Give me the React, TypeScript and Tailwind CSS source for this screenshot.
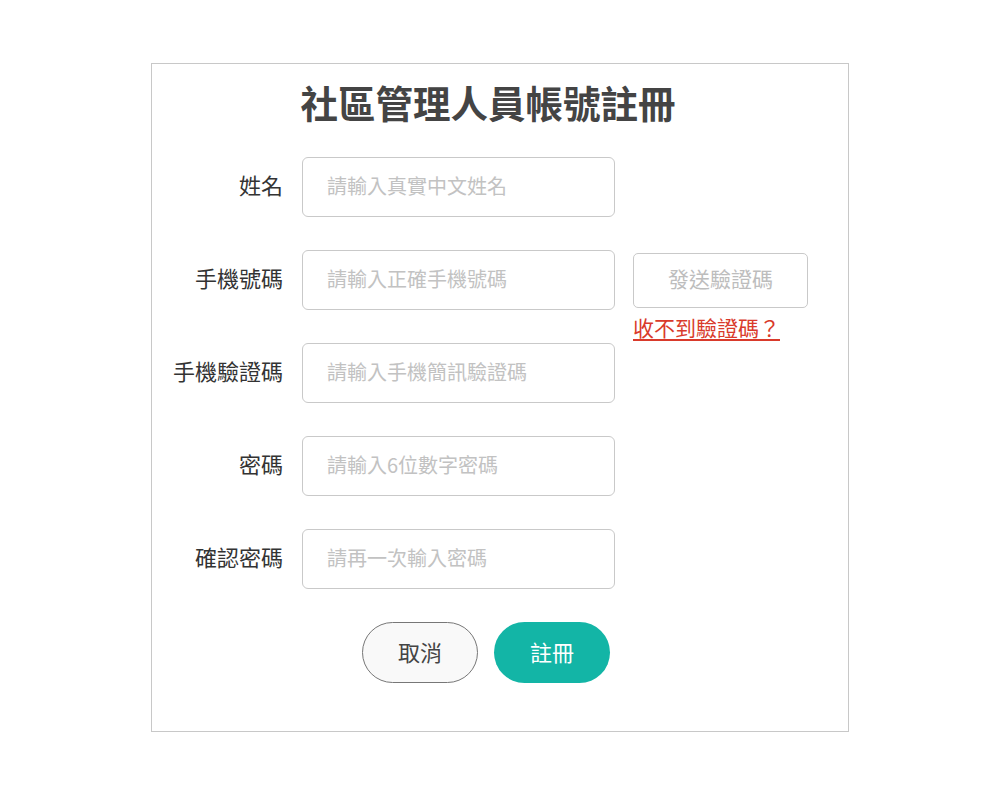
const font = { fontFamily: '"Noto Sans CJK TC", "Noto Sans", sans-serif' };

const fields = [
  { label: "姓名", placeholder: "請輸入真實中文姓名" },
  { label: "手機號碼", placeholder: "請輸入正確手機號碼", sendCode: true },
  { label: "手機驗證碼", placeholder: "請輸入手機簡訊驗證碼" },
  { label: "密碼", placeholder: "請輸入6位數字密碼" },
  { label: "確認密碼", placeholder: "請再一次輸入密碼" },
];

export default function App() {
  return (
    <div className="min-h-[796px] bg-white pt-[63px]" style={font}>
      <div className="mx-auto w-[698px] border border-[#c8c8c8] bg-white pb-[48px] pt-[14px]">
        <h1 className="pr-[24px] text-center text-[37.5px] font-bold leading-[48px] text-[#444]">
          社區管理人員帳號註冊
        </h1>

        <form className="mt-[31px] flex flex-col gap-[33px]">
          {fields.map((f) => (
            <div key={f.label} className="flex items-start">
              <label className="w-[131px] pb-[5px] text-right text-[22px] leading-[55px] text-[#333]">
                {f.label}
              </label>
              <input
                type="text"
                placeholder={f.placeholder}
                className="ml-[19px] h-[60px] w-[313px] rounded-[6px] border border-[#c9c9c9] px-[24px] pb-[3px] text-[20px] text-[#333] outline-none placeholder:text-[#c2c2c2]"
              />
              {f.sendCode && (
                <div className="relative ml-[18px] mt-[3px]">
                  <button
                    type="button"
                    className="h-[55px] w-[175px] rounded-[5px] border border-[#c9c9c9] bg-white pb-[3px] text-[21px] text-[#bdbdbd]"
                  >
                    發送驗證碼
                  </button>
                  <a
                    href="#"
                    className="absolute left-0 top-[61px] whitespace-nowrap text-[21px] leading-[26px] text-[#d93a2b] underline decoration-[2px] underline-offset-[3px]"
                  >
                    收不到驗證碼？
                  </a>
                </div>
              )}
            </div>
          ))}

          <div className="flex justify-center gap-[16px] pr-[28px]">
            <button
              type="button"
              className="h-[61px] w-[116px] rounded-full border border-[#777] bg-[#f9f9f9] pb-[3px] text-[22px] text-[#444]"
            >
              取消
            </button>
            <button
              type="button"
              className="h-[61px] w-[116px] rounded-full bg-[#13b5a6] pb-[3px] text-[22px] text-white"
            >
              註冊
            </button>
          </div>
        </form>
      </div>
    </div>
  );
}
